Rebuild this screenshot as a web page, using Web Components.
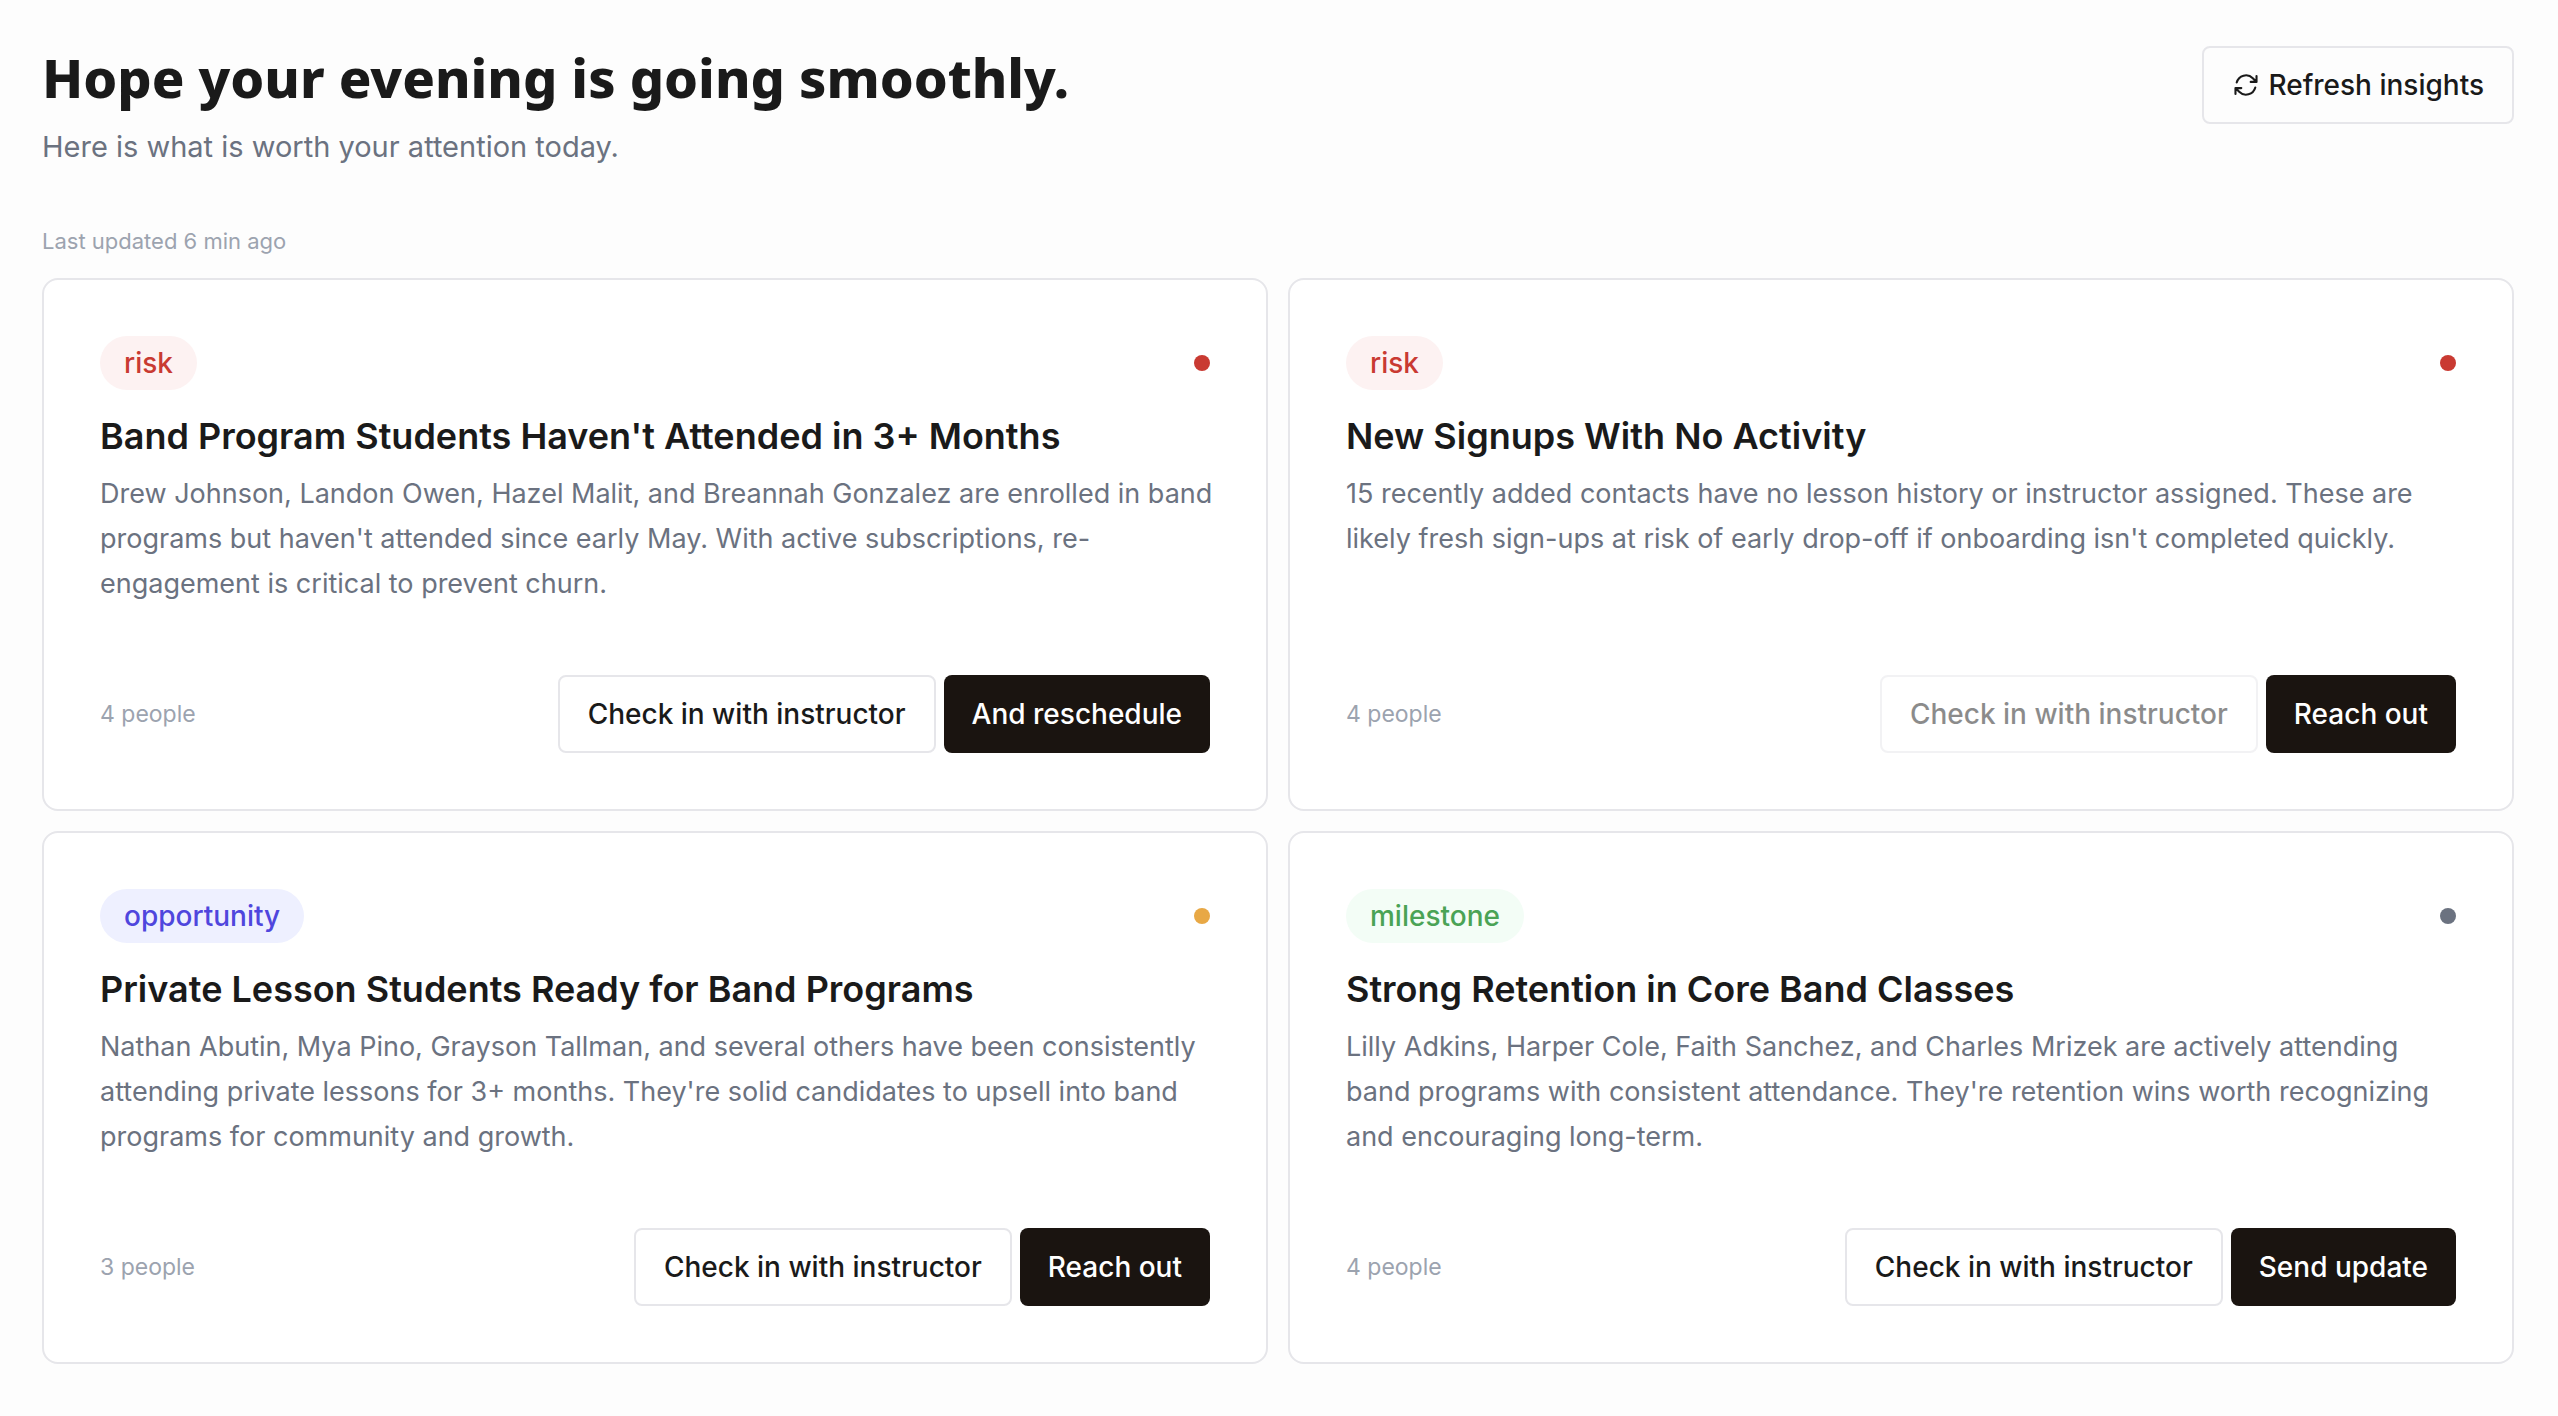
<!DOCTYPE html>
<html lang="en">
<head>
<meta charset="utf-8">
<meta name="viewport" content="width=device-width, initial-scale=1">
<title>Insights</title>
<style>
  body {
    margin: 0;
    background: #fdfdfd;
    color: #1a1a1a;
    font-family: Inter, "Liberation Sans", sans-serif;
    --line: #e6e6ea;
    --ink: #1a1a1a;
    --body: #6b7280;
    --muted: #9ca3af;
    --solid: #1a1410;
  }
</style>
</head>
<body>
<insights-page>
  <insights-header slot="header">
    <span slot="title">Hope your evening is going smoothly.</span>
    <span slot="subtitle">Here is what is worth your attention today.</span>
    <action-button slot="action"><refresh-icon slot="icon"></refresh-icon>Refresh insights</action-button>
  </insights-header>
  <span slot="updated">Last updated 6 min ago</span>

  <insight-card level="high">
    <insight-badge slot="badge" kind="risk">risk</insight-badge>
    <span slot="title">Band Program Students Haven't Attended in 3+ Months</span>
    Drew Johnson, Landon Owen, Hazel Malit, and Breannah Gonzalez are enrolled in band programs but haven't attended since early May. With active subscriptions, re-engagement is critical to prevent churn.
    <span slot="people">4 people</span>
    <action-button slot="actions">Check in with instructor</action-button>
    <action-button slot="actions" variant="solid">And reschedule</action-button>
  </insight-card>

  <insight-card level="high">
    <insight-badge slot="badge" kind="risk">risk</insight-badge>
    <span slot="title">New Signups With No Activity</span>
    15 recently added contacts have no lesson history or instructor assigned. These are likely fresh sign-ups at risk of early drop-off if onboarding isn't completed quickly.
    <span slot="people">4 people</span>
    <action-button slot="actions" disabled>Check in with instructor</action-button>
    <action-button slot="actions" variant="solid">Reach out</action-button>
  </insight-card>

  <insight-card level="medium">
    <insight-badge slot="badge" kind="opportunity">opportunity</insight-badge>
    <span slot="title">Private Lesson Students Ready for Band Programs</span>
    Nathan Abutin, Mya Pino, Grayson Tallman, and several others have been consistently attending private lessons for 3+ months. They're solid candidates to upsell into band programs for community and growth.
    <span slot="people">3 people</span>
    <action-button slot="actions">Check in with instructor</action-button>
    <action-button slot="actions" variant="solid">Reach out</action-button>
  </insight-card>

  <insight-card level="low">
    <insight-badge slot="badge" kind="milestone">milestone</insight-badge>
    <span slot="title">Strong Retention in Core Band Classes</span>
    Lilly Adkins, Harper Cole, Faith Sanchez, and Charles Mrizek are actively attending band programs with consistent attendance. They're retention wins worth recognizing and encouraging long-term.
    <span slot="people">4 people</span>
    <action-button slot="actions">Check in with instructor</action-button>
    <action-button slot="actions" variant="solid">Send update</action-button>
  </insight-card>
</insights-page>

<script>
function define(name, markup, setup) {
  const template = document.createElement('template');
  template.innerHTML = markup;
  customElements.define(name, class extends HTMLElement {
    connectedCallback() {
      if (this.shadowRoot) return;
      const root = this.attachShadow({ mode: 'open' });
      root.append(template.content.cloneNode(true));
      if (setup) setup(this, root);
    }
  });
}

define('insights-page', `
  <style>
    :host { display: block; padding: 46px 44px 52px 42px; }
    .updated { margin: 54px 0 20px; font-size: 22px; line-height: 34px; color: var(--muted); }
    .grid { display: grid; grid-template-columns: repeat(2, minmax(0, 1fr)); gap: 20px; }
    @media (max-width: 1500px) { .grid { grid-template-columns: minmax(0, 1fr); } }
  </style>
  <slot name="header"></slot>
  <p class="updated"><slot name="updated"></slot></p>
  <main class="grid"><slot></slot></main>
`);

define('insights-header', `
  <style>
    :host { display: block; }
    header { display: flex; justify-content: space-between; align-items: flex-start; gap: 20px; }
    h1 { margin: 0 0 16px; font: 800 54px/62px "Noto Sans", sans-serif; color: var(--ink); }
    p { margin: 0; font-size: 29px; line-height: 46px; color: var(--body); }
  </style>
  <header>
    <div>
      <h1><slot name="title"></slot></h1>
      <p><slot name="subtitle"></slot></p>
    </div>
    <slot name="action"></slot>
  </header>
`);

define('refresh-icon', `
  <style>
    :host { display: block; width: 28px; height: 28px; }
    svg { display: block; width: 100%; height: 100%; }
  </style>
  <svg viewBox="0 0 24 24" fill="none" stroke="currentColor" stroke-width="1.8" stroke-linecap="round" stroke-linejoin="round" aria-hidden="true">
    <path d="M16.023 9.348h4.992v-.001M2.985 19.644v-4.992m0 0h4.992m-4.993 0 3.181 3.183a8.25 8.25 0 0 0 13.803-3.7M4.031 9.865a8.25 8.25 0 0 1 13.803-3.7l3.181 3.182m0-4.991v4.99"/>
  </svg>
`);

define('action-button', `
  <style>
    :host { display: block; flex: none; }
    button {
      display: flex; align-items: center; gap: 8px;
      box-sizing: border-box; height: 78px; padding: 0 28px;
      border: 2px solid var(--line); border-radius: 8px;
      background: transparent; color: var(--ink);
      font: 500 28px/40px Inter, "Liberation Sans", sans-serif;
      white-space: nowrap; cursor: pointer;
    }
    :host([variant="solid"]) button { border: 0; background: var(--solid); color: #fff; }
    button:disabled { opacity: .5; cursor: default; }
  </style>
  <button type="button"><slot name="icon"></slot><slot></slot></button>
`, (host, root) => {
  root.querySelector('button').disabled = host.hasAttribute('disabled');
});

define('insight-badge', `
  <style>
    :host {
      display: block; padding: 0 24px; border-radius: 27px;
      font-size: 28px; font-weight: 500; line-height: 54px;
    }
    :host([kind="risk"]) { background: #fdf2f2; color: #c93a32; }
    :host([kind="opportunity"]) { background: #eef0ff; color: #4f46dd; }
    :host([kind="milestone"]) { background: #f3fdf6; color: #4aa355; }
  </style>
  <slot></slot>
`);

define('insight-card', `
  <style>
    :host { display: grid; }
    article {
      display: flex; flex-direction: column;
      padding: 56px; border: 2px solid var(--line); border-radius: 16px; background: #fff;
    }
    .top, footer, .actions { display: flex; align-items: center; }
    .top, footer { justify-content: space-between; }
    .dot { width: 16px; height: 16px; border-radius: 50%; background: #6b7280; }
    :host([level="high"]) .dot { background: #c93a32; }
    :host([level="medium"]) .dot { background: #e8a845; }
    h2 { margin: 24px 0 12px; font-size: 36px; font-weight: 600; line-height: 45px; color: var(--ink); }
    p { margin: 0 -8px 69px 0; font-size: 27px; line-height: 45px; color: var(--body); }
    footer { margin-top: auto; gap: 20px; }
    .people { font-size: 23px; line-height: 32px; color: var(--muted); }
    .actions { gap: 8px; }
  </style>
  <article>
    <div class="top"><slot name="badge"></slot><span class="dot"></span></div>
    <h2><slot name="title"></slot></h2>
    <p><slot></slot></p>
    <footer>
      <span class="people"><slot name="people"></slot></span>
      <div class="actions"><slot name="actions"></slot></div>
    </footer>
  </article>
`);
</script>
</body>
</html>
